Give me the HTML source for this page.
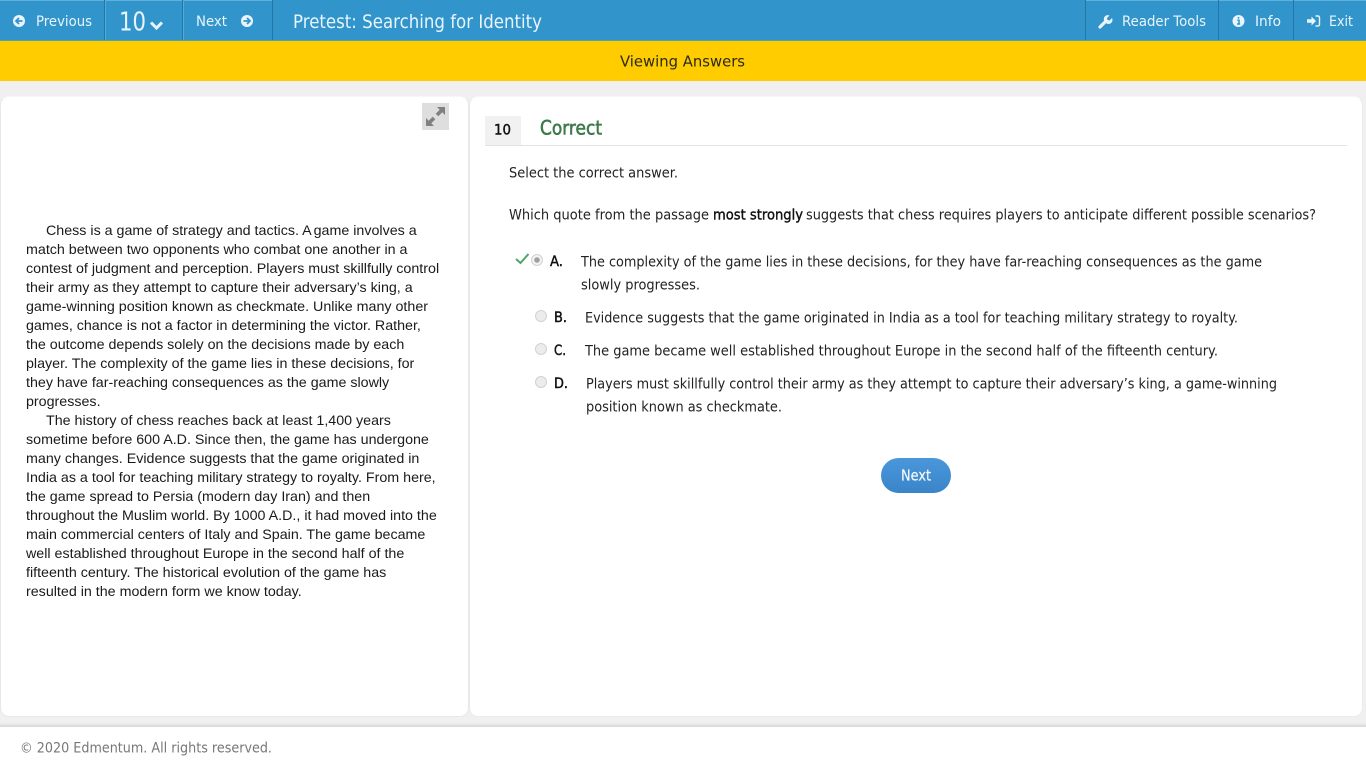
<!DOCTYPE html>
<html lang="en"><head><meta charset="utf-8"><title>Pretest: Searching for Identity</title>
<style>
html,body{margin:0;padding:0;width:1366px;height:768px;overflow:hidden;background:#f1f0f0}
div{position:absolute;box-sizing:border-box}
svg{position:absolute;left:0;top:0}
.sans text{font-family:"DejaVu Sans","Liberation Sans",sans-serif}
#passage{left:26px;top:222px;width:430px;font:14.28px/19px "Liberation Sans",Arial,sans-serif;color:#1a1a1a;white-space:nowrap}
#passage i{display:inline-block;width:20px}
#passage b{font-weight:normal;margin-right:-2px}
</style></head>
<body>
<div style="left:0;top:0;width:1366px;height:41px;background:#3195cc;border-bottom:1px solid #4fa6a8"></div>
<div style="left:0;top:0;width:273px;height:1px;background:#5fb0dc"></div>
<div style="left:1086px;top:0;width:280px;height:1px;background:#5fb0dc"></div>
<div style="left:104px;top:0;width:1px;height:40px;background:#2277a8"></div>
<div style="left:105px;top:0;width:1px;height:40px;background:#55a8d8"></div>
<div style="left:182px;top:0;width:1px;height:40px;background:#2277a8"></div>
<div style="left:183px;top:0;width:1px;height:40px;background:#55a8d8"></div>
<div style="left:272px;top:0;width:1px;height:40px;background:#2277a8"></div>
<div style="left:1085px;top:0;width:1px;height:40px;background:#2277a8"></div>
<div style="left:1218px;top:0;width:1px;height:40px;background:#2277a8"></div>
<div style="left:1293px;top:0;width:1px;height:40px;background:#2277a8"></div>
<div style="left:0;top:41px;width:1366px;height:40px;background:#ffcc00"></div>

<div style="left:0;top:96px;width:469px;height:621px;background:#fff;border:1px solid #e8e8ec;border-top-color:#f6f6f8;border-radius:9px"></div>
<div style="left:469px;top:96px;width:894px;height:621px;background:#fff;border:1px solid #ebebee;border-top-color:#f6f6f8;border-radius:9px"></div>
<div style="left:422px;top:103px;width:27px;height:27px;background:#dedede"></div>
<div style="left:485px;top:116px;width:36px;height:29px;background:#f1f1f1"></div>
<div style="left:485px;top:145px;width:862px;height:1px;background:#e3e3e3"></div>

<div id="passage"><i></i>Chess is a game of strategy and tactics. <b>A</b> game involves a<br>match between two opponents who combat one another in a<br>contest of judgment and perception. Players must skillfully control<br>their army as they attempt to capture their adversary’s king, a<br>game-winning position known as checkmate. Unlike many other<br>games, chance is not a factor in determining the victor. Rather,<br>the outcome depends solely on the decisions made by each<br>player. The complexity of the game lies in these decisions, for<br>they have far-reaching consequences as the game slowly<br>progresses.<br><i></i>The history of chess reaches back at least 1,400 years<br>sometime before 600 A.D. Since then, the game has undergone<br>many changes. Evidence suggests that the game originated in<br>India as a tool for teaching military strategy to royalty. From here,<br>the game spread to Persia (modern day Iran) and then<br>throughout the Muslim world. By 1000 A.D., it had moved into the<br>main commercial centers of Italy and Spain. The game became<br>well established throughout Europe in the second half of the<br>fifteenth century. The historical evolution of the game has<br>resulted in the modern form we know today.</div>

<div style="left:881px;top:458px;width:70px;height:35px;border-radius:18px;background:linear-gradient(#4a97dc,#3a85c8)"></div>
<div style="left:0;top:717px;width:1366px;height:10px;background:linear-gradient(#f0f0f0,#f0f0f0 60%,#d6d6d6)"></div>
<div style="left:0;top:727px;width:1366px;height:41px;background:#fff"></div>

<svg class="sans" width="1366" height="768" viewBox="0 0 1366 768" xmlns="http://www.w3.org/2000/svg">
<g fill="#e9f4fb" font-size="14">
<text x="36" y="26" textLength="56" lengthAdjust="spacingAndGlyphs">Previous</text>
<text x="196" y="26" textLength="31" lengthAdjust="spacingAndGlyphs">Next</text>
<text x="1122" y="26" textLength="84" lengthAdjust="spacingAndGlyphs">Reader Tools</text>
<text x="1255" y="26" textLength="26" lengthAdjust="spacingAndGlyphs">Info</text>
<text x="1329" y="26" textLength="24" lengthAdjust="spacingAndGlyphs">Exit</text>
<text x="119" y="30.500" font-size="26" textLength="27" lengthAdjust="spacingAndGlyphs">10</text>
<text x="293" y="28" font-size="19" textLength="249" lengthAdjust="spacingAndGlyphs">Pretest: Searching for Identity</text>
</g>
<text x="620" y="66.500" font-size="15.500" fill="#2d2a1a" textLength="125" lengthAdjust="spacingAndGlyphs">Viewing Answers</text>
<text x="494" y="134.500" font-size="14" fill="#111" stroke="#111" stroke-width=".45" textLength="17" lengthAdjust="spacingAndGlyphs">10</text>
<text x="540" y="134.500" font-size="19.500" fill="#3d7a4c" stroke="#3d7a4c" stroke-width=".6" textLength="62" lengthAdjust="spacingAndGlyphs">Correct</text>

<g fill="#222" font-size="14.200">
<text x="509" y="177.500" textLength="169" lengthAdjust="spacingAndGlyphs">Select the correct answer.</text>
<text x="509" y="219.500" textLength="200" lengthAdjust="spacingAndGlyphs">Which quote from the passage</text>
<text x="713" y="219.500" fill="#111" stroke="#111" stroke-width=".4" textLength="90" lengthAdjust="spacingAndGlyphs">most strongly</text>
<text x="806" y="219.500" textLength="510" lengthAdjust="spacingAndGlyphs">suggests that chess requires players to anticipate different possible scenarios?</text>
<text x="581" y="266.500" textLength="681" lengthAdjust="spacingAndGlyphs">The complexity of the game lies in these decisions, for they have far-reaching consequences as the game</text>
<text x="581" y="289.500" textLength="119" lengthAdjust="spacingAndGlyphs">slowly progresses.</text>
<text x="585" y="322.500" textLength="653" lengthAdjust="spacingAndGlyphs">Evidence suggests that the game originated in India as a tool for teaching military strategy to royalty.</text>
<text x="585" y="355.500" textLength="633" lengthAdjust="spacingAndGlyphs">The game became well established throughout Europe in the second half of the fifteenth century.</text>
<text x="586" y="388.500" textLength="691" lengthAdjust="spacingAndGlyphs">Players must skillfully control their army as they attempt to capture their adversary’s king, a game-winning</text>
<text x="586" y="411.500" textLength="196" lengthAdjust="spacingAndGlyphs">position known as checkmate.</text>
</g>
<g fill="#111" stroke="#111" stroke-width=".45" font-size="14.200">
<text x="550" y="266" textLength="13" lengthAdjust="spacingAndGlyphs">A.</text>
<text x="554" y="322" textLength="13" lengthAdjust="spacingAndGlyphs">B.</text>
<text x="554" y="355" textLength="12" lengthAdjust="spacingAndGlyphs">C.</text>
<text x="554" y="388" textLength="14" lengthAdjust="spacingAndGlyphs">D.</text>
</g>
<text x="901" y="480.500" font-size="15" fill="#f6fafd" stroke="#f6fafd" stroke-width=".2" textLength="30" lengthAdjust="spacingAndGlyphs">Next</text>
<text x="20" y="752.500" font-size="14" fill="#777" textLength="252" lengthAdjust="spacingAndGlyphs">© 2020 Edmentum. All rights reserved.</text>

<!-- nav icons -->
<circle cx="19" cy="21" r="6" fill="#e9f4fb"/>
<path d="M22.500 21H16.500M19 18L16 21L19 24" fill="none" stroke="#3195cc" stroke-width="1.800"/>
<circle cx="247" cy="21" r="6" fill="#e9f4fb"/>
<path d="M243.500 21H249.500M247 18L250 21L247 24" fill="none" stroke="#3195cc" stroke-width="1.800"/>
<path d="M151 22.500L156.500 28L162 22.500" fill="none" stroke="#e9f4fb" stroke-width="3"/>
<path d="M1100 27L1106 21" stroke="#e9f4fb" stroke-width="3.200" stroke-linecap="round"/>
<path d="M1105 22A4 4 0 0 0 1112 18L1109.500 20.500L1107.500 20L1107 18L1109.500 15.500A4 4 0 0 0 1105 22Z" fill="#e9f4fb"/>
<circle cx="1238.500" cy="21" r="6" fill="#e9f4fb"/>
<path d="M1238.500 17v1.600M1237.300 20.300h1.700v3.500M1237 24h3.200" stroke="#3195cc" stroke-width="1.500" fill="none"/>
<path d="M1307 19.300h4.500V16.500L1316 21L1311.500 25.500V22.700H1307Z" fill="#e9f4fb"/>
<path d="M1315.500 16h2.500a1.500 1.500 0 0 1 1.500 1.500v7a1.500 1.500 0 0 1-1.500 1.500h-2.500" fill="none" stroke="#e9f4fb" stroke-width="1.400"/>

<!-- expand icon -->
<path d="M445 107V115L442.300 112.300L438.300 116.300L435.700 113.700L439.700 109.700L437 107Z" fill="#808080"/>
<path d="M426 126V118L428.700 120.700L432.700 116.700L435.300 119.300L431.300 123.300L434 126Z" fill="#808080"/>

<!-- check and radios -->
<path d="M516 259L520.500 263L528.500 254" fill="none" stroke="#4ea568" stroke-width="2"/>
<circle cx="537" cy="260" r="5.500" fill="#f3f3f3" stroke="#d2d2d2"/>
<circle cx="537" cy="260" r="2.800" fill="#a0a0a0"/>
<g fill="#ececec" stroke="#d2d2d2">
<circle cx="541" cy="316" r="5.500"/>
<circle cx="541" cy="349" r="5.500"/>
<circle cx="541" cy="382" r="5.500"/>
</g>
</svg>
</body></html>
